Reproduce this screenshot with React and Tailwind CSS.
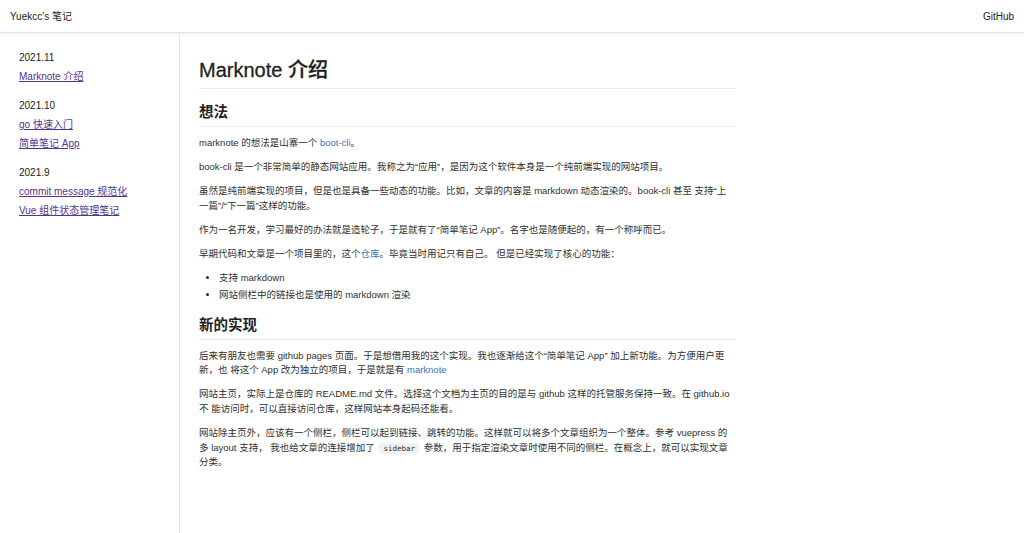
import React from "react";

const posts = [
  { date: "2021.11", items: ["Marknote 介绍"] },
  { date: "2021.10", items: ["go 快速入门", "简单笔记 App"] },
  { date: "2021.9", items: ["commit message 规范化", "Vue 组件状态管理笔记"] },
];

function Sidebar() {
  return (
    <aside className="w-[180px] shrink-0 border-r border-[#e6e6e6] pl-[19px] pt-[15px] text-[10px] leading-[19px] text-[#222]">
      {posts.map((group) => (
        <div key={group.date} className="mb-[10px]">
          <div>{group.date}</div>
          {group.items.map((item) => (
            <div key={item}>
              <a href="#" className="text-[#52348b] underline">{item}</a>
            </div>
          ))}
        </div>
      ))}
    </aside>
  );
}

function Article() {
  const link = "text-[#3a70b5]";
  const h2 = "text-[14.5px] leading-[20px] font-bold text-[#222] pb-[4px] border-b border-[#eaecef]";
  return (
    <main className="w-[537px] ml-[19px] pt-[25px] text-[9.5px] leading-[14.5px] text-[#2f2f2f] whitespace-nowrap">
      <h1 className="text-[20px] leading-[25px] font-medium text-[#1f1f1f] pb-[5px] border-b border-[#eaecef] [-webkit-text-stroke:0.3px_#1f1f1f]">Marknote 介绍</h1>

      <h2 className={"mt-[13px] " + h2}>想法</h2>
      <p className="mt-[9px]">marknote 的想法是山寨一个 <a href="#" className={link}>boot-cli</a>。</p>
      <p className="mt-[9.5px]">book-cli 是一个非常简单的静态网站应用。我称之为“应用”，是因为这个软件本身是一个纯前端实现的网站项目。</p>
      <p className="mt-[9.5px]">虽然是纯前端实现的项目，但是也是具备一些动态的功能。比如，文章的内容是 markdown 动态渲染的。book-cli 甚至 支持“上<br />一篇”/“下一篇”这样的功能。</p>
      <p className="mt-[10px]">作为一名开发，学习最好的办法就是造轮子，于是就有了“简单笔记 App”。名字也是随便起的，有一个称呼而已。</p>
      <p className="mt-[9.5px]">早期代码和文章是一个项目里的，这个<a href="#" className={link}>仓库</a>。毕竟当时用记只有自己。 但是已经实现了核心的功能：</p>
      <ul className="mt-[7.5px] pl-[20px] list-disc leading-[17px]">
        <li>支持 markdown</li>
        <li>网站侧栏中的链接也是使用的 markdown 渲染</li>
      </ul>

      <h2 className={"mt-[11.5px] " + h2}>新的实现</h2>
      <p className="mt-[9px]">后来有朋友也需要 github pages 页面。于是想借用我的这个实现。我也逐渐给这个“简单笔记 App” 加上新功能。为方便用户更<br />新，也 将这个 App 改为独立的项目，于是就是有 <a href="#" className={link}>marknote</a></p>
      <p className="mt-[9.5px]">网站主页，实际上是仓库的 README.md 文件。选择这个文档为主页的目的是与 github 这样的托管服务保持一致。在 github.io<br />不 能访问时，可以直接访问仓库，这样网站本身起码还能看。</p>
      <p className="mt-[10px]">网站除主页外，应该有一个侧栏，侧栏可以起到链接、跳转的功能。这样就可以将多个文章组织为一个整体。参考 vuepress 的<br />多 layout 支持， 我也给文章的连接增加了 <code className="font-['DejaVu_Sans_Mono',monospace] text-[7.5px] leading-[10px] bg-[#f1f1f1] rounded-[3px] px-[4px] py-[1px] mx-[2px]">sidebar</code> 参数，用于指定渲染文章时使用不同的侧栏。在概念上，就可以实现文章<br />分类。</p>
    </main>
  );
}

export default function App() {
  return (
    <div className="h-screen flex flex-col bg-white font-['Liberation_Sans','Noto_Sans_CJK_SC',sans-serif]">
      <header className="h-[33px] shrink-0 flex items-center justify-between px-[10px] text-[10px] text-[#222] border-b border-[#e2e2e2] shadow-[0_1px_3px_rgba(0,0,0,0.07)]">
        <span>Yuekcc's 笔记</span>
        <a href="#">GitHub</a>
      </header>
      <div className="flex flex-1 min-h-0">
        <Sidebar />
        <Article />
      </div>
    </div>
  );
}
